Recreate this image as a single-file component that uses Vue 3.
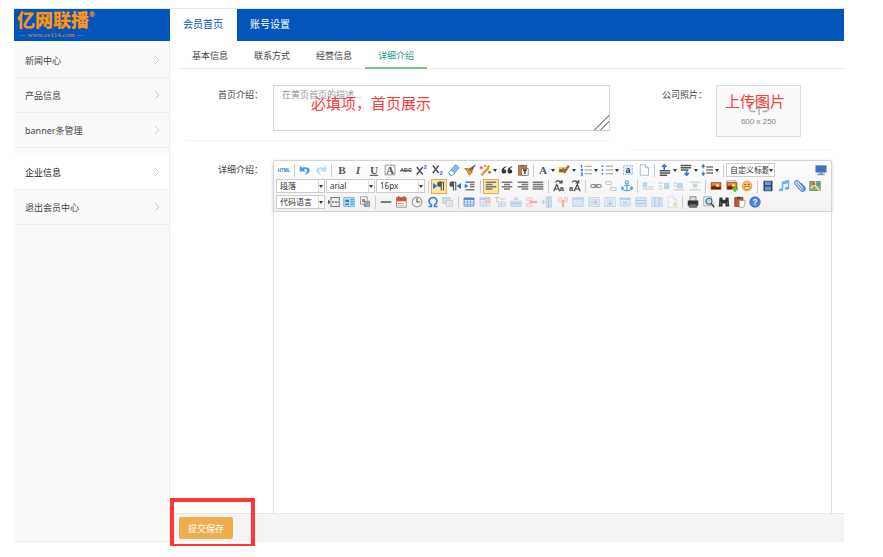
<template>
  <div class="page">
    <header class="topbar">
      <a class="logo" href="#">
        <span class="logo-name">亿网联播<sup>®</sup></span>
        <span class="logo-url">— www.ce114.com —</span>
      </a>
      <nav class="top-nav">
        <a
          v-for="item in topTabs"
          :key="item"
          href="#"
          :class="{ active: item === activeTop }"
          @click.prevent="activeTop = item"
        >{{ item }}</a>
      </nav>
    </header>

    <div class="body">
      <aside class="sidebar">
        <ul v-for="(group, i) in menu" :key="i">
          <li v-for="item in group" :key="item">
            <a href="#" :class="{ active: item === activeMenu }" @click.prevent="activeMenu = item">
              {{ item }}
              <svg class="chevron" viewBox="0 0 6 10"><path d="M1 1l4 4-4 4" fill="none" stroke="#ccc" /></svg>
            </a>
          </li>
        </ul>
      </aside>

      <form class="main" @submit.prevent>
        <nav class="sub-nav">
          <a
            v-for="item in subTabs"
            :key="item"
            href="#"
            :class="{ active: item === activeSub }"
            @click.prevent="activeSub = item"
          >{{ item }}</a>
        </nav>

        <div class="intro-row">
          <div class="field intro">
            <label for="intro">首页介绍：</label>
            <div class="intro-box">
              <textarea id="intro" v-model="intro" placeholder="在黄页首页的描述..."></textarea>
              <span class="note intro-note">必填项，首页展示</span>
            </div>
          </div>
          <div class="field photo">
            <label for="photo">公司照片：</label>
            <button id="photo" type="button" class="upload">
              <svg viewBox="0 0 24 20" fill="none" stroke="#aaa" stroke-width="1.500">
                <path d="M8 15H5a4 4 0 0 1 0-8 7 7 0 0 1 13-1 4.500 4.500 0 0 1 1 9h-3M12 19v-9M9 12l3-3 3 3" />
              </svg>
              <span>600 x 250</span>
              <span class="note upload-note">上传图片</span>
            </button>
          </div>
        </div>

        <div class="field detail">
          <label for="detail">详细介绍：</label>
          <div class="editor">
            <div class="toolbar">
              <div v-for="(row, r) in toolbar" :key="r" class="tool-row" :class="'row-' + (r + 1)">
                <template v-for="(tool, t) in row" :key="t">
                  <i v-if="tool === '|'" class="sep"></i>
                  <span v-else-if="tool.options" class="combo">
                    <select :aria-label="tool.label">
                      <option v-for="o in tool.options" :key="o">{{ o }}</option>
                    </select>
                    <i class="caret"></i>
                  </span>
                  <button
                    v-else
                    type="button"
                    class="tool"
                    :class="{ menu: tool.menu, on: tool.on, last: tool.last }"
                    :disabled="tool.off"
                    :aria-label="tool.icon"
                  >
                    <svg viewBox="0 0 16 16" v-html="icons[tool.icon]"></svg>
                    <i v-if="tool.menu" class="caret"></i>
                  </button>
                </template>
              </div>
            </div>
            <textarea id="detail" v-model="detail" class="content"></textarea>
          </div>
        </div>

        <footer class="actions">
          <button type="submit" class="save">提交保存</button>
          <span class="frame"></span>
        </footer>
      </form>
    </div>
  </div>
</template>

<script setup>
import { ref } from 'vue'

const topTabs = ['会员首页', '账号设置']
const subTabs = ['基本信息', '联系方式', '经营信息', '详细介绍']
const menu = [
  ['新闻中心', '产品信息', 'banner条管理'],
  ['企业信息', '退出会员中心']
]

const activeTop = ref('会员首页')
const activeSub = ref('详细介绍')
const activeMenu = ref('企业信息')
const intro = ref('')
const detail = ref('')

// helpers for toolbar entries
const list = (names, extra = {}) => names.split(' ').map(icon => ({ icon, ...extra }))
const off = names => list(names, { off: true })
const menus = names => list(names, { menu: true })

const toolbar = [
  [
    ...list('html'), '|', ...list('undo'), ...off('redo'), '|',
    ...list('bold italic underline border strike sup sub eraser brush'),
    ...menus('wand'), ...list('quote pasteText'), '|',
    ...menus('color marker ol ul'), ...list('selectAll blank'), '|',
    ...menus('spaceTop spaceBottom lineHeight'), '|',
    { label: '标题', options: ['自定义标题'] },
    { icon: 'monitor', last: true }
  ],
  [
    { label: '段落格式', options: ['段落'] },
    { label: '字体', options: ['arial'] },
    { label: '字号', options: ['16px'] }, '|',
    { icon: 'ltr', on: true }, ...list('rtl indent'), '|',
    { icon: 'left', on: true }, ...list('center right justify'), '|',
    ...list('upper lower'), '|', ...list('link'), ...off('unlink'), ...list('anchor'), '|',
    ...off('imgNone imgLeft imgRight imgCenter'), '|',
    ...list('image images smile'), '|', ...list('video music attach map')
  ],
  [
    { label: '代码语言', options: ['代码语言'] },
    ...list('pageBreak template background'), '|',
    ...list('hr date time omega'), ...off('snap'), '|', ...list('table'),
    ...off('delTable paraBefore insRow delRow insCol delCol cells mergeRight mergeDown splitCells splitRows splitCols chart'),
    '|', ...list('print preview find clipboard help')
  ]
]

const letter = (t, attrs = '') =>
  `<text x="8" y="13" text-anchor="middle" font-family="Liberation Serif, serif" font-size="15" font-weight="bold" fill="#555" ${attrs}>${t}</text>`
const lines = (spec, color = '#777') =>
  `<path d="${spec}" fill="none" stroke="${color}" stroke-width="2"/>`
const grid = (extra = '') =>
  `<path d="M1.500 2.500h13v11h-13z" fill="#eaf2ff" stroke="#4c7fd0"/><path d="M1 3h14v2H1z" fill="#3468be"/><path d="M1 8h14M1 11h14M6 5v9M10 5v9" stroke="#6e98dc"/>${extra}`
const picture = '<path d="M1 3h14v10H1z" fill="#a63b14"/><path d="M2 4h12v5H2z" fill="#ef8427"/><circle cx="10" cy="7" r="2" fill="#ffe08a"/><path d="M2 9l4-2 3 3 5-1v3H2z" fill="#652611"/>'
const paper = '<path d="M3 1h7l4 4v10H3z" fill="#fff" stroke="#94a9c2"/><path d="M10 1v4h4" fill="#dde7f3" stroke="#94a9c2"/>'

const icons = {
  html: '<text x="8" y="10" text-anchor="middle" font-family="Liberation Sans, sans-serif" font-size="6" font-weight="bold" fill="#327ab8">HTML</text>',
  undo: '<path d="M1 2v8h8L6.500 7.500C11 5 12 9 8 15c9-3 9-13-4-10z" fill="#4a9ce8"/>',
  redo: '<path d="M15 2v8H7l2.500-2.500C5 5 4 9 8 15-1 12-1 2 12 5z" fill="#4a9ce8"/>',
  bold: letter('B'),
  italic: letter('I', 'font-style="italic"'),
  underline: letter('U', 'text-decoration="underline"'),
  border: '<path d="M1.500 1.500h13v13h-13z" fill="none" stroke="#777"/>' + letter('A'),
  strike: '<text x="8" y="11" text-anchor="middle" font-family="Liberation Sans, sans-serif" font-size="7" font-weight="bold" fill="#444">ABC</text><path d="M0 8.500h16" stroke="#444"/>',
  sup: '<path d="M1 4l8 10M9 4l-8 10" stroke="#555" stroke-width="2"/><text x="10" y="7" font-size="8" font-family="Liberation Sans" font-weight="bold" fill="#2c6fd0">2</text>',
  sub: '<path d="M1 2l8 10M9 2l-8 10" stroke="#555" stroke-width="2"/><text x="10" y="15" font-size="8" font-family="Liberation Sans" font-weight="bold" fill="#2c6fd0">2</text>',
  eraser: '<path d="M1 11l9-10 5 4-9 10H3z" fill="#8bbcf0" stroke="#5688c9"/><path d="M1 11l3-3 5 4-3 3H3z" fill="#fff" stroke="#5688c9"/>',
  brush: '<path d="M15 1l-4 7-3-2z" fill="#8b5a2b" stroke="#8b5a2b"/><path d="M8 5l4 4-2 2-5-4z" fill="#777"/><path d="M1 6h4l6 5-4 4c-1-3-3-6-6-9z" fill="#e89b33" stroke="#a76320"/>',
  wand: '<path d="M3 15L13 5" stroke="#f08c2e" stroke-width="3"/><path d="M3 3v4M1 5h4M8 1v3M14 9v4M12 11h4" stroke="#e8602b" stroke-width="2"/><path d="M11 5l3-3" stroke="#e8a02b" stroke-width="3"/>',
  quote: '<path d="M7 3C2 4 0 8 1 11c1 3 6 2 6-1 0-2-2-3-3-3 0-1 1-2 3-3zM15 3c-5 1-7 5-6 8 1 3 6 2 6-1 0-2-2-3-3-3 0-1 1-2 3-3z" fill="#333"/>',
  pasteText: '<path d="M2 2h11v13H2z" fill="#c48045" stroke="#865127"/><path d="M5 1h5v3H5z" fill="#777"/><path d="M6 6h9v9H6z" fill="#fff" stroke="#667"/><path d="M8 8h5M10.500 8v5" stroke="#333" stroke-width="2"/>',
  color: letter('A'),
  marker: '<path d="M1 4h10v8H1z" fill="#ffc84a"/><text x="1" y="11" font-size="8" font-family="Liberation Sans" font-weight="bold" fill="#333">ab</text><path d="M15 3L10 11l-2 1 1-3 4-7z" fill="#d8752d" stroke="#8a4f20"/>',
  ol: '<path d="M2 1v4M1 7h2v2H1M1 12h2v3H1" fill="none" stroke="#2b70d0" stroke-width="1.500"/><path d="M6 3h10M6 8h10M6 13h10" stroke="#777"/>',
  ul: '<path d="M1 2h2v2H1zM1 7h2v2H1zM1 12h2v2H1z" fill="#2b70d0"/><path d="M6 3h10M6 8h10M6 13h10" stroke="#777"/>',
  selectAll: '<path d="M2 2h12v12H2z" fill="#dcecff" stroke="#65a1e8" stroke-dasharray="2"/><text x="8" y="12" text-anchor="middle" font-size="11" font-weight="bold" font-family="Liberation Sans" fill="#334">a</text>',
  blank: paper,
  spaceTop: lines('M1 9h14M1 12h14M1 15h10', '#555') + '<path d="M7 8V3M4 4l3-3 3 3" fill="none" stroke="#3973c8" stroke-width="2"/>',
  spaceBottom: lines('M1 2h14M1 5h14M1 8h10', '#555') + '<path d="M9 8v6M6 12l3 3 3-3" fill="none" stroke="#3973c8" stroke-width="2"/>',
  lineHeight: lines('M7 4h9M7 8h9M7 12h9') + '<path d="M3 2v4M3 10v4M1 4l2-3 2 3M1 12l2 3 2-3" fill="none" stroke="#3973c8" stroke-width="1.500"/>',
  monitor: '<path d="M1 2h14v9H1z" fill="#3d6fc7" stroke="#7895bd"/><path d="M6 11h4v2h3v2H3v-2h3z" fill="#8597ad"/>',
  ltr: '<path d="M0 4l6 4-6 4z" fill="#2879d0"/><path d="M15 3H9M11 3v11M14 3v11" fill="none" stroke="#555" stroke-width="1.500"/><path d="M9 2h2v7H9a3 3 0 0 1 0-7" fill="#555"/>',
  rtl: '<path d="M16 4l-6 4 6 4z" fill="#2879d0"/><path d="M9 3H4M6 3v11M9 3v11" fill="none" stroke="#555" stroke-width="1.500"/><path d="M4 2h2v7H4a3 3 0 0 1 0-7" fill="#555"/>',
  indent: lines('M2 3h12M8 6h6M8 9h6M2 13h12') + '<path d="M1 5l5 3-5 3z" fill="#2879d0"/>',
  left: lines('M1 3h14M1 6h9M1 9h14M1 12h9'),
  center: lines('M1 3h14M4 6h8M1 9h14M4 12h8'),
  right: lines('M1 3h14M6 6h9M1 9h14M6 12h9'),
  justify: lines('M1 3h14M1 6h14M1 9h14M1 12h14'),
  upper: '<path d="M1 15l4-9 4 9M3 12h5M3 3c2-3 6-2 8 0M8 4h4V0" fill="none" stroke="#444" stroke-width="1.500"/><text x="9" y="15" font-size="10" font-family="Liberation Sans" font-weight="bold" fill="#444">a</text>',
  lower: '<text x="0" y="15" font-size="10" font-family="Liberation Sans" font-weight="bold" fill="#444">a</text><path d="M7 15l4-9 4 9M9 12h5M4 3c2-3 6-2 8 0M9 4h4V0" fill="none" stroke="#444" stroke-width="1.500"/>',
  link: '<rect x="1" y="6" width="7" height="4" rx="2" fill="none" stroke="#888" stroke-width="1.500"/><rect x="8" y="6" width="7" height="4" rx="2" fill="none" stroke="#888" stroke-width="1.500"/><path d="M5 8h6" stroke="#666"/>',
  unlink: '<rect x="1" y="2" width="8" height="4" rx="2" fill="none" stroke="#777" stroke-width="1.500"/><rect x="7" y="10" width="8" height="4" rx="2" fill="none" stroke="#777" stroke-width="1.500"/><path d="M6 6l4 4" stroke="#777"/>',
  anchor: '<circle cx="8" cy="3" r="2" fill="none" stroke="#5a9bd8" stroke-width="1.500"/><path d="M8 5v10M4 7h8M1 9c1 7 13 7 14 0M1 9v4M1 9l3 2M15 9v4M15 9l-3 2" fill="none" stroke="#5a9bd8" stroke-width="1.500"/>',
  imgNone: '<path d="M1 3h6v7H1z" fill="#3b9bd8"/>' + lines('M9 9h6M1 12h14', '#999'),
  imgLeft: '<path d="M8 4h7v8H8z" fill="#3b9bd8"/>' + lines('M1 4h5M1 8h5M1 12h5', '#999'),
  imgRight: '<path d="M5 4h8v7H5z" fill="#3b9bd8"/>' + lines('M1 4h3M1 8h3M1 13h14', '#999'),
  imgCenter: '<path d="M5 5h6v5H5z" fill="#3b9bd8"/>' + lines('M1 3h14M1 13h14', '#999'),
  image: picture,
  images: '<path d="M1 1h12v9H1z" fill="#eee" stroke="#999"/>' + picture + '<path d="M12 8v8M8 12h8" stroke="#6fbd22" stroke-width="3"/>',
  smile: '<circle cx="8" cy="8" r="6.500" fill="#ffc456" stroke="#dc9030"/><circle cx="5.500" cy="6" r="1" fill="#743e13"/><circle cx="10.500" cy="6" r="1" fill="#743e13"/><path d="M4 9c1 5 7 5 8 0z" fill="#fff" stroke="#9a5520"/>',
  video: '<path d="M2 1h12v14H2z" fill="#39435a"/><path d="M4 2h8v5H4zM4 9h8v5H4z" fill="#6e93dd"/>',
  music: '<path d="M6 13V3l8-2v10" fill="none" stroke="#6bb1e6" stroke-width="2"/><path d="M6 5l8-2" stroke="#6bb1e6" stroke-width="2"/><ellipse cx="4" cy="13" rx="3" ry="2" fill="#6bb1e6"/><ellipse cx="12" cy="11" rx="3" ry="2" fill="#6bb1e6"/>',
  attach: '<path d="M3 3l8 9c2 2 4 0 2-2L6 2C3-1-1 3 2 6l7 8c4 3 8-1 5-5L9 4" fill="none" stroke="#4f83dc" stroke-width="1.500"/>',
  map: '<path d="M1 2h14v12H1z" fill="#86b76b" stroke="#68776a"/><path d="M2 11l5-5 7 8M9 2l-2 5" fill="none" stroke="#f5e7a2" stroke-width="2"/><path d="M10 4h4v4h-4z" fill="#5a8ed2"/><circle cx="6" cy="5" r="2" fill="#d94a3a"/>',
  pageBreak: '<path d="M4 6V2h11v4M4 10v4h11v-4" fill="#eee" stroke="#777" stroke-width="1.500"/><path d="M5 8h11" stroke="#777" stroke-dasharray="3 1" stroke-width="2"/><path d="M0 5l4 3-4 3z" fill="#555"/>',
  template: '<path d="M1 2h14v12H1z" fill="#b9e0f8" stroke="#56a7dc"/><path d="M3 5h5v3H3zM3 10h5v2H3z" fill="#2184c4"/><path d="M10 5h4M10 8h4M10 11h4" stroke="#2184c4" stroke-width="1.500"/>',
  background: '<path d="M2 1h9v10H2z" fill="#fff" stroke="#6285b1"/><path d="M4 4h4v4H4z" fill="#e76e34"/><path d="M7 7h7v7H7z" fill="#8cb9ef" stroke="#557eb8"/><path d="M8 13l6-6" stroke="#d79131" stroke-width="2"/>',
  hr: '<path d="M1 8h14" stroke="#555" stroke-width="2"/>',
  date: '<path d="M2 2h13v13H2z" fill="#fff" stroke="#b46a60"/><path d="M2 2h13v5H2z" fill="#dc4a40"/><path d="M5 0v3M12 0v3" stroke="#777" stroke-width="2"/><path d="M4 10h9M4 13h9" stroke="#999" stroke-dasharray="2 1" stroke-width="1.500"/>',
  time: '<circle cx="8" cy="8" r="6.500" fill="#f5f5f5" stroke="#999" stroke-width="1.500"/><path d="M8 3v5h4" fill="none" stroke="#555" stroke-width="1.500"/>',
  omega: '<path d="M2 14h4v-2C1 9 2 2 8 2s7 7 2 10v2h4" fill="none" stroke="#3c78d8" stroke-width="2"/>',
  snap: '<path d="M1 2h10v8H1z" fill="#7eb6e8" stroke="#4b7ba8"/><path d="M6 6h8v8H6z" fill="#dce9f7" stroke="#557ba0"/><path d="M9 12l5-5" stroke="#d79131" stroke-width="2"/>',
  table: grid(),
  delTable: grid('<path d="M8 2h7v7H8z" fill="#e95050"/><path d="M10 4l3 3M13 4l-3 3" stroke="#fff"/>'),
  paraBefore: '<path d="M1 2h6M4 2v7M8 4h7" stroke="#777" stroke-width="1.500"/><path d="M6 8h9v6H6zM6 11h9M10 8v6" fill="#d8e7ff" stroke="#5d87c4"/>',
  insRow: '<path d="M1 7h14v7H1z" fill="#8fbdf0" stroke="#4f83c4"/><path d="M1 10h14M8 1v5M5 4h6" stroke="#3c78c8" stroke-width="1.500"/>',
  delRow: '<path d="M1 2h7v4H1zM1 10h7v4H1z" fill="#f6caca" stroke="#d66"/><path d="M5 8h10" stroke="#d33" stroke-width="3"/>',
  insCol: '<path d="M7 1h7v14H7z" fill="#8fbdf0" stroke="#4f83c4"/><path d="M10 1v14M1 8h5M3 5v6" stroke="#3c78c8" stroke-width="1.500"/>',
  delCol: '<path d="M2 2h4v6H2zM10 2h4v6h-4z" fill="#f6caca" stroke="#d66"/><path d="M8 5v10" stroke="#d33" stroke-width="3"/>',
  cells: '<path d="M1 2h14v12H1z" fill="#a9cbf7" stroke="#5688c9"/><path d="M1 4h14" stroke="#5688c9" stroke-width="2"/>',
  mergeRight: '<path d="M1 2h14v12H1zM1 5h14M1 11h14" fill="#d5e6fc" stroke="#5688c9"/><path d="M3 8h9M9 6l3 2-3 2" fill="none" stroke="#2879d0" stroke-width="1.500"/>',
  mergeDown: '<path d="M1 2h14v12H1zM5 2v12M11 2v12" fill="#d5e6fc" stroke="#5688c9"/><path d="M8 4v7M6 9l2 3 2-3" fill="none" stroke="#2879d0" stroke-width="1.500"/>',
  splitCells: grid('<path d="M6 7h4v4H6z" fill="#9590d8"/>'),
  splitRows: '<path d="M1 2h14v12H1z" fill="#a9cbf7" stroke="#5688c9"/><path d="M1 6h14M1 10h14" stroke="#2879d0" stroke-width="1.500"/>',
  splitCols: '<path d="M1 2h14v12H1z" fill="#a9cbf7" stroke="#5688c9"/><path d="M5 2v12M11 2v12" stroke="#2879d0" stroke-width="1.500"/>',
  chart: paper + '<path d="M9 11h6M12 8v6" stroke="#b6c94a" stroke-width="3"/>',
  print: '<path d="M4 1h8v6H4z" fill="#ddd" stroke="#777"/><path d="M1 6h14v7H1z" fill="#333"/><path d="M3 11h10v4H3z" fill="#777" stroke="#444"/>',
  preview: '<path d="M1 1h10v12H1z" fill="#eef4fb" stroke="#8a99aa"/><circle cx="8" cy="7" r="4" fill="#b8dce4" stroke="#486b78" stroke-width="1.500"/><path d="M11 10l4 5" stroke="#444" stroke-width="2"/>',
  find: '<path d="M2 2h4v3h4V2h4l1 12h-5v-4H6v4H1z" fill="#333"/><path d="M3 8v4M13 8v4" stroke="#8a8a8a"/>',
  clipboard: '<path d="M1 2h11v12H1z" fill="#b6582f" stroke="#83401f"/><path d="M4 1h5v3H4z" fill="#555"/><path d="M7 6h8l-2 9H7z" fill="#fff" stroke="#999"/>',
  help: '<circle cx="8" cy="8" r="7" fill="#4a82e4" stroke="#3566bf"/><text x="8" y="12" text-anchor="middle" font-size="11" font-weight="bold" font-family="Liberation Sans" fill="#fff">?</text>'
}
</script>

<style>
body {
  margin: 0;
  background: #fff;
}
</style>

<style scoped>
.page {
  box-sizing: border-box;
  display: flex;
  flex-direction: column;
  min-height: 100vh;
  padding: 8px 39px 15px 14px;
  font-family: "Noto Sans", "Noto Sans CJK SC", sans-serif;
  font-size: 9px;
  color: #444;
}

a {
  color: inherit;
  text-decoration: none;
}

button,
select,
textarea {
  box-sizing: border-box;
  margin: 0;
  font-family: inherit;
}

.topbar {
  display: flex;
  height: 32px;
  border-top: 1px solid #e4e8ee;
  background: #0355bc;
}

.logo {
  display: flex;
  flex-direction: column;
  box-sizing: border-box;
  width: 156px;
  padding: 2px 0 0 3px;
  color: #ff9314;
}

.logo-name {
  font-size: 18px;
  font-weight: 900;
  line-height: 19px;
}

.logo-name sup {
  font-size: 7px;
  line-height: 8px;
  vertical-align: top;
}

.logo-url {
  padding-left: 2px;
  font-family: "Liberation Serif", serif;
  font-size: 7px;
  line-height: 10px;
  color: #c99a55;
}

.top-nav {
  display: flex;
}

.top-nav a {
  padding: 0 14px 0 13px;
  font-size: 10px;
  line-height: 31px;
  color: #fff;
}

.top-nav a.active {
  background: #fff;
  color: #0355bc;
}

.body {
  display: flex;
  flex: 1;
}

.sidebar {
  box-sizing: border-box;
  width: 156px;
  border-right: 1px solid #eee;
  border-bottom: 1px solid #eee;
  background: #fafafa;
}

.sidebar ul {
  margin: 0 0 5px;
  padding: 2px 0 0;
  list-style: none;
}

.sidebar a {
  display: flex;
  align-items: center;
  justify-content: space-between;
  height: 34px;
  padding: 0 9px 0 11px;
  border-bottom: 1px solid #eee;
}

.sidebar a.active {
  background: #fff;
  color: #222;
}

.chevron {
  width: 6px;
  height: 10px;
}

.main {
  display: flex;
  flex: 1;
  flex-direction: column;
  min-width: 0;
}

.sub-nav {
  display: flex;
  margin-left: 9px;
  border-bottom: 1px solid #e8e8e8;
}

.sub-nav a {
  margin-bottom: -1px;
  padding: 3px 13px 0;
  border-bottom: 2px solid transparent;
  line-height: 23px;
}

.sub-nav a.active {
  border-color: #7cc48f;
  color: #1a9c8c;
}

.intro-row {
  display: flex;
  align-items: flex-start;
  gap: 19px;
  padding: 16px 12px 10px 15px;
}

.field {
  display: flex;
}

.field label {
  flex: none;
  width: 45px;
  line-height: 20px;
  white-space: nowrap;
}

.intro {
  flex: 1;
  gap: 10px;
  padding: 0 0 9px 33px;
  border-bottom: 1px solid #f4f4f4;
}

.intro-box {
  position: relative;
  flex: 1;
}

.intro textarea {
  display: block;
  width: 100%;
  height: 46px;
  padding: 3px 8px;
  border: 1px solid #d5d5d5;
  font-size: 9px;
  line-height: 12px;
}

.intro textarea::placeholder {
  color: #999;
}

.intro textarea::-webkit-resizer {
  background: linear-gradient(135deg, transparent 50%, #999 50%, #999 55%, transparent 55%, transparent 70%, #999 70%, #999 75%, transparent 75%);
}

.note {
  position: absolute;
  font-size: 15px;
  line-height: 20px;
  white-space: nowrap;
  color: #ff3a3a;
  pointer-events: none;
}

.intro-note {
  top: 8px;
  left: 38px;
}

.photo {
  gap: 9px;
  padding: 0 31px 12px 33px;
  border-bottom: 1px solid #f4f4f4;
}

.upload {
  position: relative;
  display: flex;
  flex-direction: column;
  align-items: center;
  width: 85px;
  height: 52px;
  padding: 12px 0 0;
  border: 1px solid #ddd;
  background: #fafafa;
  font-family: "Liberation Sans", "Noto Sans CJK SC", sans-serif;
  font-size: 8px;
  line-height: 12px;
  color: #888;
}

.upload svg {
  width: 24px;
  height: 18px;
}

.upload-note {
  top: 6px;
  left: 8px;
}

.detail {
  flex: 1;
  gap: 10px;
  padding: 0 12px 0 48px;
}

.editor {
  display: flex;
  flex: 1;
  flex-direction: column;
  min-width: 0;
}

.toolbar {
  padding: 1px 2px;
  border: 1px solid #d4d4d4;
  border-radius: 2px 2px 0 0;
  background: linear-gradient(#fff, #f1f1f1);
  box-shadow: 0 1px 3px rgba(0, 0, 0, 0.2);
}

.tool-row {
  display: flex;
  align-items: center;
  height: 16px;
}

.row-2 {
  width: 547px;
}

.row-3 {
  width: 487px;
}

.tool {
  display: flex;
  flex: 16 1 0;
  align-items: center;
  justify-content: center;
  min-width: 0;
  height: 15px;
  padding: 0;
  border: 1px solid transparent;
  background: none;
}

.tool svg {
  flex: none;
  width: 12px;
  height: 12px;
}

.tool.menu {
  flex-grow: 22;
  gap: 2px;
}

.tool.on {
  border-color: #dcac6c;
  background: #ffe69f;
}

.tool:disabled {
  opacity: 0.35;
}

.tool.last {
  flex: none;
  width: 16px;
  margin-left: 37px;
}

.sep {
  flex: 6 1 0;
  height: 13px;
  background: linear-gradient(#ccc, #ccc) center / 1px 100% no-repeat;
}

.combo {
  display: flex;
  flex: none;
  align-items: center;
  box-sizing: border-box;
  width: 49px;
  height: 14px;
  margin-right: 1px;
  padding-right: 1px;
  border: 1px solid #ccc;
  background: #fff;
}

.combo select {
  flex: 1;
  min-width: 0;
  height: 12px;
  padding: 0 0 0 3px;
  border: 0;
  border-right: 1px solid #ddd;
  appearance: none;
  background: none;
  font-size: 8px;
  line-height: 12px;
  color: #333;
}

.caret {
  flex: none;
  border: 2px solid transparent;
  border-top: 3px solid #333;
  border-bottom: 0;
}

.content {
  flex: 1;
  width: 100%;
  min-height: 300px;
  padding: 8px;
  border: 1px solid #ddd;
  border-width: 0 1px;
  resize: none;
  font-size: 12px;
}

.content:focus {
  outline: none;
}

.actions {
  position: relative;
  display: flex;
  padding: 3px 9px 3px;
  border-top: 1px solid #e6e6e6;
  background: #f4f4f4;
}

.save {
  height: 22px;
  padding: 0 9px;
  border: 0;
  border-radius: 2px;
  background: #f0ad4e;
  font-size: 9px;
  color: #fff;
}

.frame {
  position: absolute;
  top: -16px;
  left: 0;
  box-sizing: border-box;
  width: 85px;
  height: 48px;
  border: 4px solid #ff3737;
  border-bottom-width: 2px;
  pointer-events: none;
}
</style>
